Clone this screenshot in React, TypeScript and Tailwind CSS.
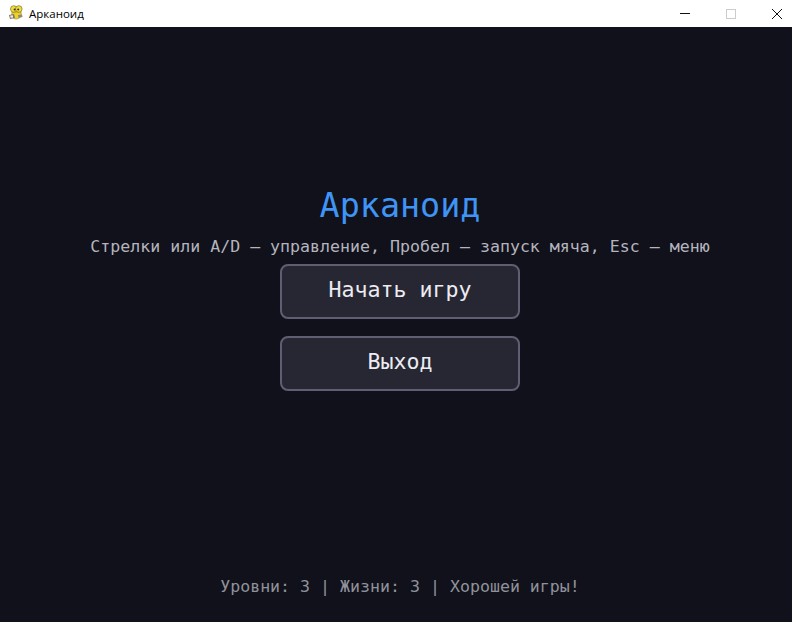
const mono = "font-['DejaVu_Sans_Mono',monospace]";

function PygameIcon() {
  return (
    <svg width="16" height="18" viewBox="0 0 16 18" className="mt-[-2px] shrink-0">
      <path d="M4 8 C3 12 5 15 8 15 C12 15 14 12 13 8Z" fill="#f0d020" stroke="#9a8a20" strokeWidth="0.6" />
      <circle cx="5.8" cy="5" r="3.3" fill="#f3dc3a" stroke="#7d7330" strokeWidth="0.7" />
      <circle cx="10.8" cy="5" r="3.3" fill="#f3dc3a" stroke="#7d7330" strokeWidth="0.7" />
      <circle cx="6.6" cy="5.6" r="1" fill="#333" />
      <circle cx="10.2" cy="5.6" r="1" fill="#333" />
      <path d="M1 11 L6 10 L7 14 L2 15Z" fill="#77776f" />
      <rect x="2.4" y="11.4" width="2.6" height="2.2" fill="#eeeee4" />
      <path d="M10 11 L14 10.5 L14.5 13 L10.5 14Z" fill="#8a8a80" />
    </svg>
  );
}

function TitleBar() {
  return (
    <div className="flex h-[27px] items-center bg-white">
      <div className="ml-[8px] flex items-center gap-[5px]">
        <PygameIcon />
        <span className="font-['Open_Sans',sans-serif] text-[11.5px] leading-none text-black">Арканоид</span>
      </div>
      <div className="ml-auto mr-[-8px] flex h-full items-center">
        <div className="flex h-full w-[46px] items-center justify-center">
          <div className="h-px w-[10px] bg-[#111]" />
        </div>
        <div className="flex h-full w-[46px] items-center justify-center">
          <div className="h-[10px] w-[10px] border border-[#ccc]" />
        </div>
        <div className="flex h-full w-[46px] items-center justify-center">
          <svg width="10" height="10" viewBox="0 0 10 10">
            <path d="M0 0 L10 10 M10 0 L0 10" stroke="#111" strokeWidth="1" fill="none" />
          </svg>
        </div>
      </div>
    </div>
  );
}

function MenuButton({ label }: { label: string }) {
  return (
    <button className="flex h-[55px] w-[240px] items-center justify-center rounded-[8px] border-2 border-[#5f5f73] bg-[#272733] pb-[4px] text-[21.6px] leading-none text-[#ececf2]">
      {label}
    </button>
  );
}

export default function App() {
  return (
    <div className={`flex h-[622px] w-[792px] flex-col overflow-hidden bg-[#10111a] ${mono}`}>
      <TitleBar />
      <main className="flex flex-1 flex-col items-center pl-[8px] pt-[156px]">
        <h1 className="text-[33.4px] leading-[46px] text-[#3f94f5]">Арканоид</h1>
        <p className="mt-[6px] text-[16.6px] leading-[24px] text-[#b4b4be]">
          Стрелки или A/D — управление, Пробел — запуск мяча, Esc — меню
        </p>
        <div className="mt-[5px] flex flex-col gap-[17px]">
          <MenuButton label="Начать игру" />
          <MenuButton label="Выход" />
        </div>
        <p className="mt-auto mb-[23px] text-[16.6px] leading-[24px] text-[#91919b]">
          Уровни: 3 | Жизни: 3 | Хорошей игры!
        </p>
      </main>
    </div>
  );
}
